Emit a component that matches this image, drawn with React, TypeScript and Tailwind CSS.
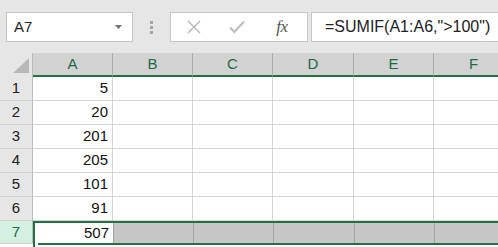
import React from "react";

const cols = ["A", "B", "C", "D", "E", "F"];
const widths = [80, 80, 80, 81, 80, 80];
const data = ["5", "20", "201", "205", "101", "91"];

export default function App() {
  return (
    <div className="w-[498px] h-[247px] overflow-hidden bg-white font-['Liberation_Sans',Arial,sans-serif] text-[#222]">
      {/* Top bar */}
      <div className="h-[53px] bg-[#e6e6e6] flex items-start pt-[12px] pl-[6px]">
        <div className="w-[127px] h-[30px] shrink-0 border border-[#c6c6c6] bg-white flex items-center justify-between pl-[7px] pr-[10px]">
          <span className="text-[15px] text-[#222]">A7</span>
          <svg width="7" height="4" viewBox="0 0 7 4">
            <path d="M0 0 L7 0 L3.5 4 Z" fill="#6f6f6f" />
          </svg>
        </div>
        <div className="w-[37px] h-[30px] shrink-0 flex flex-col items-center justify-center gap-[2px]">
          <div className="w-[3px] h-[3px] bg-[#a6a6a6]" />
          <div className="w-[3px] h-[3px] bg-[#a6a6a6]" />
          <div className="w-[3px] h-[3px] bg-[#a6a6a6]" />
        </div>
        <div className="w-[138px] h-[30px] shrink-0 border border-[#c6c6c6] bg-white flex items-center">
          <div className="w-[44px] flex justify-center pl-[2px]">
            <svg width="14" height="14" viewBox="0 0 14 14">
              <path d="M1 1 L13 13 M13 1 L1 13" stroke="#b3b3b3" strokeWidth="1.4" />
            </svg>
          </div>
          <div className="w-[44px] flex justify-center">
            <svg width="16" height="14" viewBox="0 0 16 14">
              <path d="M1 7.5 L5.5 12 L15 1.5" stroke="#bdbdbd" strokeWidth="2.2" fill="none" />
            </svg>
          </div>
          <div className="w-[46px] flex justify-center">
            <span className="font-['Liberation_Serif',serif] italic text-[17px] text-[#555] tracking-[-0.5px]">fx</span>
          </div>
        </div>
        <div className="ml-[3px] h-[30px] flex-1 -mr-[10px] border border-[#c6c6c6] bg-white flex items-center pl-[13px]">
          <span className="text-[16px] text-[#222] whitespace-nowrap">=SUMIF(A1:A6,"&gt;100")</span>
        </div>
      </div>

      {/* Column headers */}
      <div className="flex h-[24px]">
        <div className="w-[33px] shrink-0 bg-[#e6e6e6] border-r border-[#b9b9b9] relative">
          <svg className="absolute right-[3px] bottom-[4px]" width="16" height="15" viewBox="0 0 16 15">
            <path d="M16 0 L16 15 L0 15 Z" fill="#b8b8b8" />
          </svg>
        </div>
        {cols.map((c, i) => (
          <div
            key={c}
            style={{ width: widths[i] }}
            className="shrink-0 bg-[#d2d2d2] border-r border-[#ababab] border-b-2 border-b-[#217346] flex items-center justify-center text-[15px] text-[#1e6a43]"
          >
            {c}
          </div>
        ))}
      </div>

      {/* Rows 1-6 */}
      {data.map((v, r) => (
        <div key={r} className="flex h-[24px]">
          <div className="w-[33px] shrink-0 bg-[#e6e6e6] border-r border-[#b9b9b9] border-b border-b-[#d4d4d4] flex items-center justify-center text-[15px] text-[#222]">
            {r + 1}
          </div>
          {cols.map((c, i) => (
            <div
              key={c}
              style={{ width: widths[i] }}
              className="shrink-0 border-r border-b border-[#d4d4d4] flex items-center justify-end pr-[4px] text-[15px] text-[#111]"
            >
              {i === 0 ? v : ""}
            </div>
          ))}
        </div>
      ))}

      {/* Row 7 selected */}
      <div className="flex h-[26px] relative">
        <div className="w-[33px] shrink-0 h-[23px] bg-[#d3f0e0] border-r border-[#b9b9b9] border-b border-b-[#cfcfcf] flex items-center justify-center text-[15px] text-[#1e6a43]">
          7
        </div>
        <div className="flex-1 flex flex-col">
          <div className="flex h-[24px] border-t-2 border-b-2 border-[#217346]">
            <div
              style={{ width: widths[0] }}
              className="shrink-0 bg-white border-l-2 border-[#217346] flex items-center justify-end pr-[4px] text-[15px] text-[#111]"
            >
              507
            </div>
            {cols.slice(1).map((c, i) => (
              <div
                key={c}
                style={{ width: widths[i + 1] }}
                className="shrink-0 bg-[#c6c6c6] border-l border-[#a3a3a3]"
              />
            ))}
          </div>
          <div className="h-[2px] border-l-2 border-[#217346]" />
        </div>
        <div className="absolute left-[35px] top-[22px] w-[3px] h-[4px] bg-white" />
      </div>
    </div>
  );
}
